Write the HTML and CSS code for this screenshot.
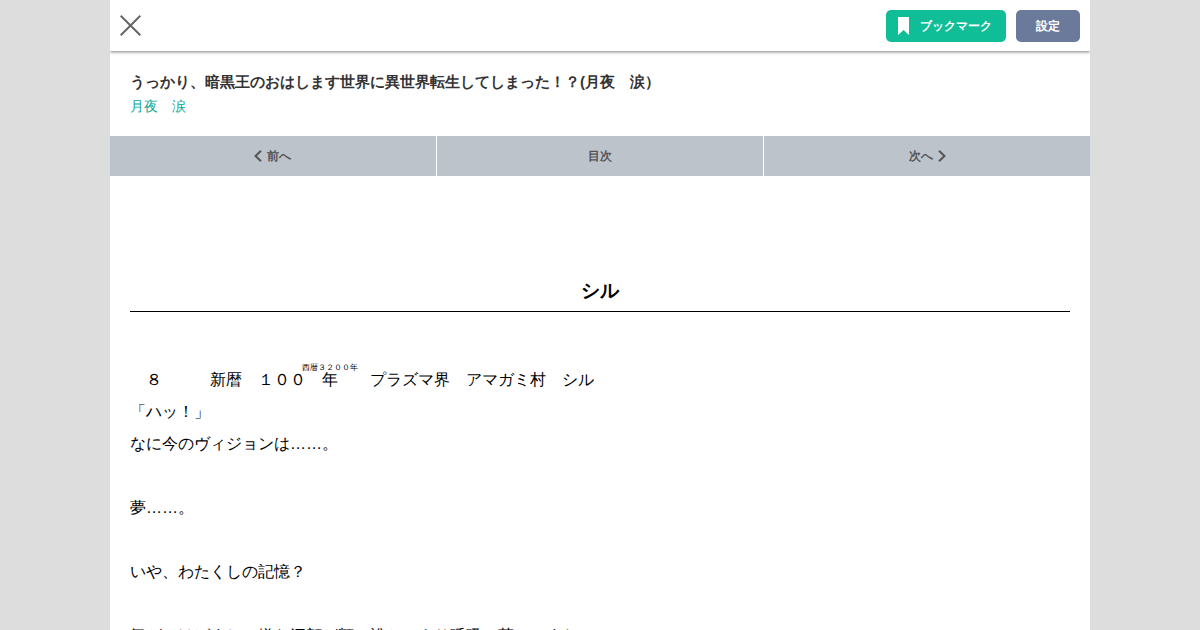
FILE: index.html
```html
<!DOCTYPE html>
<html lang="ja">
<head>
<meta charset="utf-8">
<title>シル</title>
<link rel="stylesheet" href="styles.css">
</head>
<body>
<div class="page">
  <header class="toolbar">
    <a class="close" aria-label="閉じる"><svg width="21" height="21" viewBox="0 0 21 21"><path d="M.7.7l19.6 19.6M20.3.7L.7 20.3" fill="none" stroke="#666" stroke-width="2"/></svg></a>
    <div class="actions">
      <a class="button bookmark"><svg width="11" height="18" viewBox="0 0 11 18"><path d="M0 0h11v18l-5.5-5L0 18z" fill="#fff"/></svg><span class="label">ブックマーク</span></a>
      <a class="button settings"><span class="label">設定</span></a>
    </div>
  </header>
  <div class="work">
    <h1 class="title">うっかり、暗黒王のおはします世界に異世界転生してしまった！？(月夜　涙）</h1>
    <a class="author">月夜　涙</a>
  </div>
  <nav class="pager">
    <a class="pager-item prev"><svg width="8" height="12" viewBox="0 0 8 12"><path d="M7 .8L1.5 6 7 11.2" fill="none" stroke="#555" stroke-width="2"/></svg>前へ</a>
    <a class="pager-item">目次</a>
    <a class="pager-item">次へ<svg width="8" height="12" viewBox="0 0 8 12"><path d="M1 .8L6.5 6 1 11.2" fill="none" stroke="#555" stroke-width="2"/></svg></a>
  </nav>
  <main class="episode">
    <h2 class="episode-title">シル</h2>
    <div class="body">
      <p class="dateline">　８　　　新暦　１００<ruby>　年　<rt>西暦３２００年</rt></ruby>　プラズマ界　アマガミ村　シル</p>
      <p>「ハッ！」</p>
      <p>なに今のヴィジョンは……。</p>
      <p><br></p>
      <p>夢……。</p>
      <p><br></p>
      <p>いや、わたくしの記憶？</p>
      <p><br></p>
      <p>気がつけばまし、嫌な汗顔が額、誰かのより呼吸、荒い。また</p>
    </div>
  </main>
</div>
</body>
</html>
```
FILE: styles.css
```css
* { box-sizing: border-box; }
html { overflow: hidden; }
body {
  margin: 0;
  height: 630px;
  overflow: hidden;
  background: #ddd;
  color: #000;
  font-family: "Liberation Sans", sans-serif;
}
.page {
  width: 980px;
  height: 630px;
  margin: 0 auto;
  overflow: hidden;
  background: #fff;
}
.toolbar {
  display: flex;
  justify-content: space-between;
  align-items: center;
  width: 980px;
  height: 51px;
  padding: 0 10px;
  background: #fff;
  box-shadow: 0 1px 3px rgba(0, 0, 0, .5);
}
.close { display: flex; }
.actions { display: flex; gap: 10px; }
.button {
  display: flex;
  align-items: center;
  justify-content: center;
  height: 32px;
  border-radius: 5px;
  color: #fff;
  font-size: 12px;
  font-weight: bold;
}
.label { padding-top: 2px; }
.bookmark { width: 120px; gap: 11px; padding-right: 2px; background: #0fbe96; }
.settings { width: 64px; background: #6b7a9b; }
.work { height: 85px; padding: 20px 20px 0; }
.title { margin: 0; color: #333; font-size: 15px; line-height: 22px; }
.author { display: block; margin-top: 3px; color: #0aa898; font-size: 14px; line-height: 21px; }
.pager {
  display: grid;
  grid-template-columns: repeat(3, 1fr);
  gap: 1px;
  height: 40px;
}
.pager-item {
  display: flex;
  align-items: center;
  justify-content: center;
  gap: 5px;
  background: #bdc3cb;
  color: #555;
  font-size: 12px;
  font-weight: bold;
}
.prev { padding-right: 2px; }
.episode { padding: 94px 20px 0; }
.episode-title {
  height: 42px;
  margin: 0 0 51px;
  border-bottom: 1px solid #000;
  font-size: 19px;
  line-height: 41px;
  text-align: center;
}
.body { font-size: 16px; line-height: 32px; }
.body p { height: 32px; margin: 0; white-space: nowrap; }
.body .dateline { height: 33px; }
.body ruby { margin: 0 -2px 0 -3px; }
.body rt { font-size: 8px; line-height: 17px; }
```
